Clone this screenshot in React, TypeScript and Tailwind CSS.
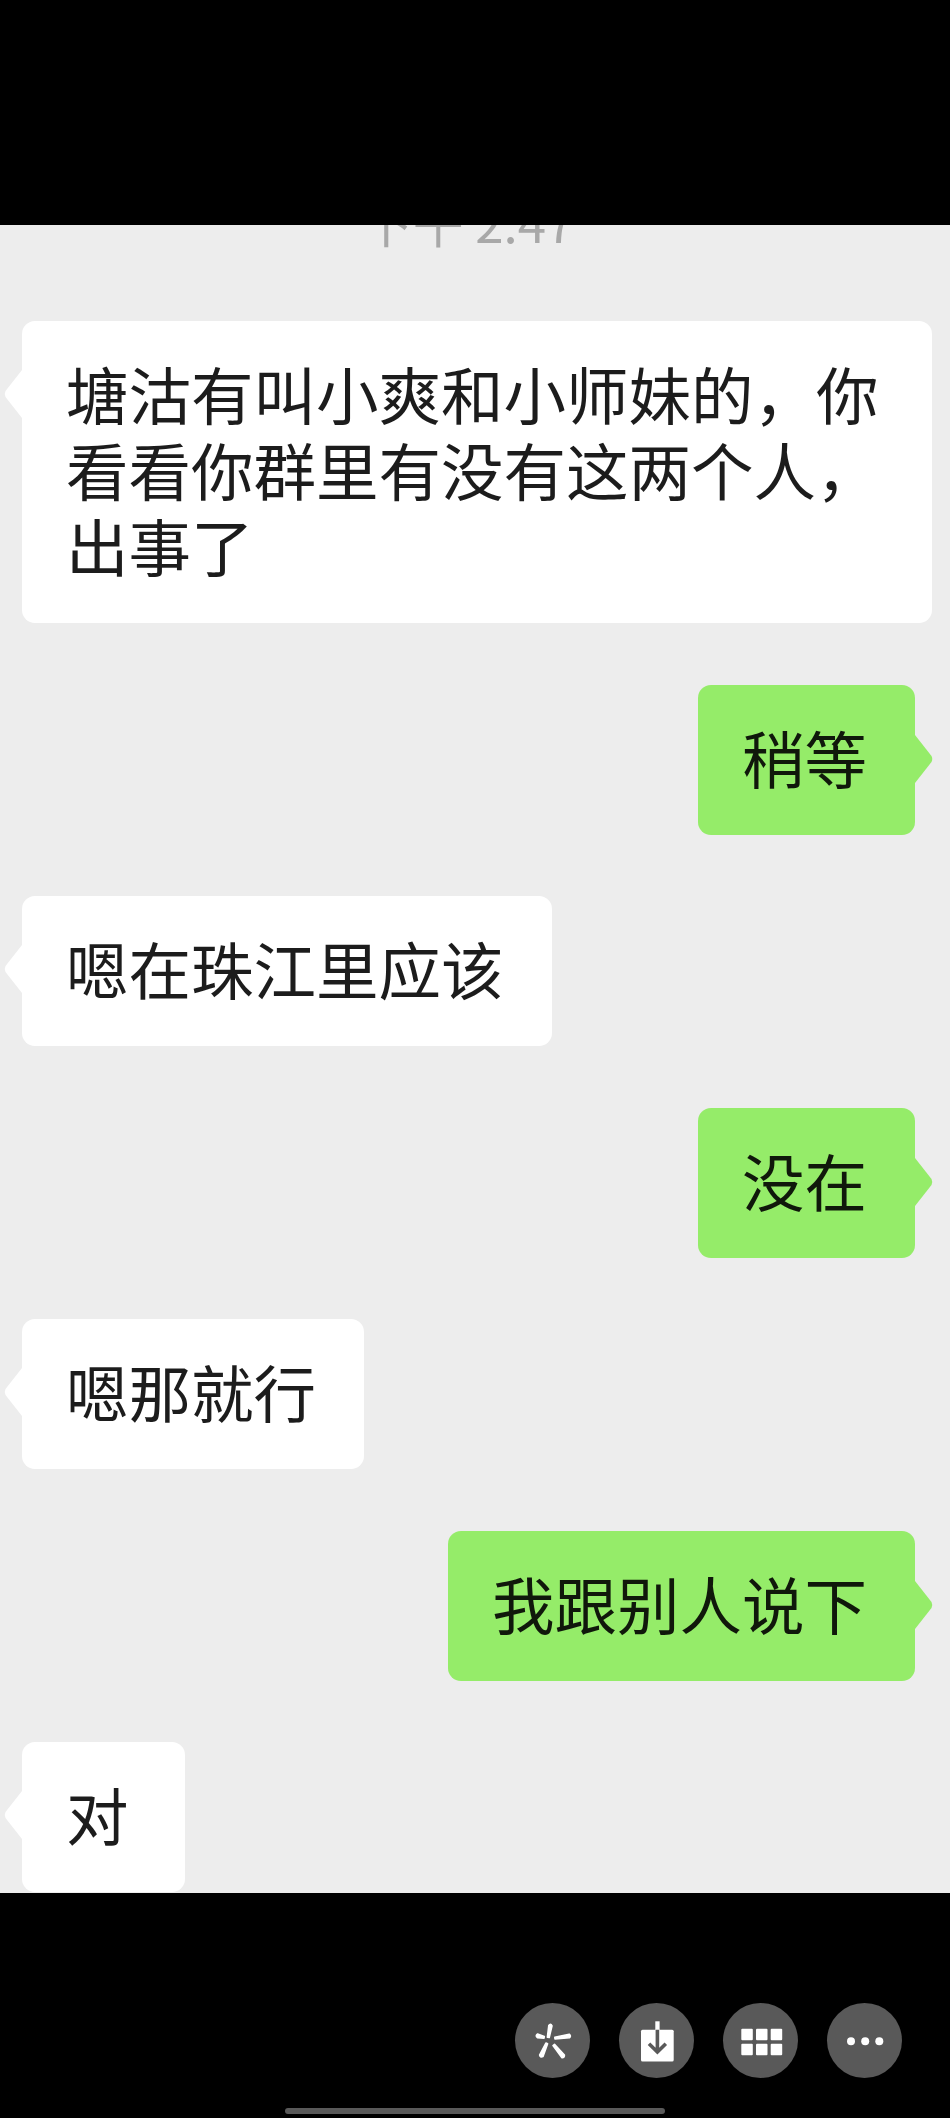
const font = "font-['Noto_Sans_CJK_SC','Noto_Sans',sans-serif]";

const Bubble = ({ text, mine }: { text: string; mine?: boolean }) => {
  return (
    <div className={mine ? "flex justify-end pr-[35px]" : "flex justify-start pl-[22px]"}>
      <div
        className={
          mine
            ? "relative max-w-[910px] rounded-[13px] bg-[#95ec69] pt-[34px] pr-[48px] pb-[40px] pl-[44px] text-[62.5px] leading-[76px] text-[#10180b]"
            : "relative min-w-[163px] max-w-[910px] rounded-[13px] bg-white pt-[34px] pr-[48px] pb-[40px] pl-[44px] text-[62.5px] leading-[76px] text-[#1c1c1c]"
        }
      >
        {text}
        {mine ? (
          <svg viewBox="0 0 18 48" className="absolute top-[50px] right-[-18px] h-[48px] w-[18px]">
            <path d="M0 0 L16.5 21 Q18 24 16.5 27 L0 48 Z" fill="#95ec69" />
          </svg>
        ) : (
          <svg viewBox="0 0 18 48" className="absolute top-[49px] left-[-18px] h-[48px] w-[18px]">
            <path d="M18 0 L1.5 21 Q0 24 1.5 27 L18 48 Z" fill="#ffffff" />
          </svg>
        )}
      </div>
    </div>
  );
};

const Circle = ({ children }: { children: React.ReactNode }) => {
  return (
    <button className="h-[75px] w-[75px] rounded-full bg-[#595959]">
      <svg viewBox="0 0 75 75" className="h-[75px] w-[75px]">
        {children}
      </svg>
    </button>
  );
};

const App = () => {
  return (
    <div className={`${font} flex h-[2118px] w-[950px] flex-col overflow-hidden bg-black`}>
      <div className="h-[225px] shrink-0"></div>

      <section className="flex h-[1668px] shrink-0 flex-col overflow-hidden bg-[#ededed]">
        <div className="h-[96px] shrink-0 overflow-hidden">
          <p className="mt-[-34px] pr-[14px] text-center text-[51px] leading-[60px] text-[#a8a8a8]">下午 2:47</p>
        </div>
        <div className="flex flex-col gap-[61.5px]">
          <Bubble text="塘沽有叫小爽和小师妹的，你看看你群里有没有这两个人，出事了" />
          <Bubble mine text="稍等" />
          <Bubble text="嗯在珠江里应该" />
          <Bubble mine text="没在" />
          <Bubble text="嗯那就行" />
          <Bubble mine text="我跟别人说下" />
          <Bubble text="对" />
        </div>
      </section>

      <div className="flex flex-1 flex-col">
        <div className="mt-[110px] flex justify-end gap-[29px] pr-[48px]">
          <Circle>
            <g fill="#ffffff" stroke="#ffffff" strokeWidth="1.6" strokeLinejoin="round">
              <path d="M33.8 22.5 Q35.5 20 37 22.8 L34.2 34.5 L32.4 34.2 Z" />
              <path d="M54.2 31.2 Q56.5 33 54.4 34.8 L40 36 L39.8 34.2 Z" />
              <path d="M49.4 52 Q49.6 55 46.8 54.6 L38 42.6 L39.5 41.4 Z" />
              <path d="M28 53.6 Q25 54.6 24.6 52 L30.9 40 L32.6 40.8 Z" />
              <path d="M22.6 31 Q20 32.8 22.4 34.6 L29 35.2 L29.3 33.4 Z" />
            </g>
          </Circle>
          <Circle>
            <rect x="22" y="26.7" width="32.7" height="31.8" rx="1.5" fill="#ffffff" />
            <rect x="36.3" y="18.3" width="4.3" height="9" fill="#ffffff" />
            <path d="M38.4 26.7 V48 M30 40.8 L38.4 49 L46.8 40.8" fill="none" stroke="#595959" strokeWidth="3.6" />
          </Circle>
          <Circle>
            <g fill="#ffffff">
              <rect x="18.3" y="25.7" width="11.5" height="11.5" rx="1" />
              <rect x="33" y="25.7" width="11.5" height="11.5" rx="1" />
              <rect x="47.7" y="25.7" width="11.5" height="11.5" rx="1" />
              <rect x="18.3" y="40.7" width="11.5" height="11.5" rx="1" />
              <rect x="33" y="40.7" width="11.5" height="11.5" rx="1" />
              <rect x="47.7" y="40.7" width="11.5" height="11.5" rx="1" />
            </g>
          </Circle>
          <Circle>
            <g fill="#ffffff">
              <circle cx="24" cy="38.3" r="4" />
              <circle cx="38.2" cy="38.3" r="4" />
              <circle cx="52.3" cy="38.3" r="4" />
            </g>
          </Circle>
        </div>
        <div className="mx-auto mt-[30px] h-[6px] w-[380px] rounded-full bg-[#595959]"></div>
      </div>
    </div>
  );
};

export default App;
